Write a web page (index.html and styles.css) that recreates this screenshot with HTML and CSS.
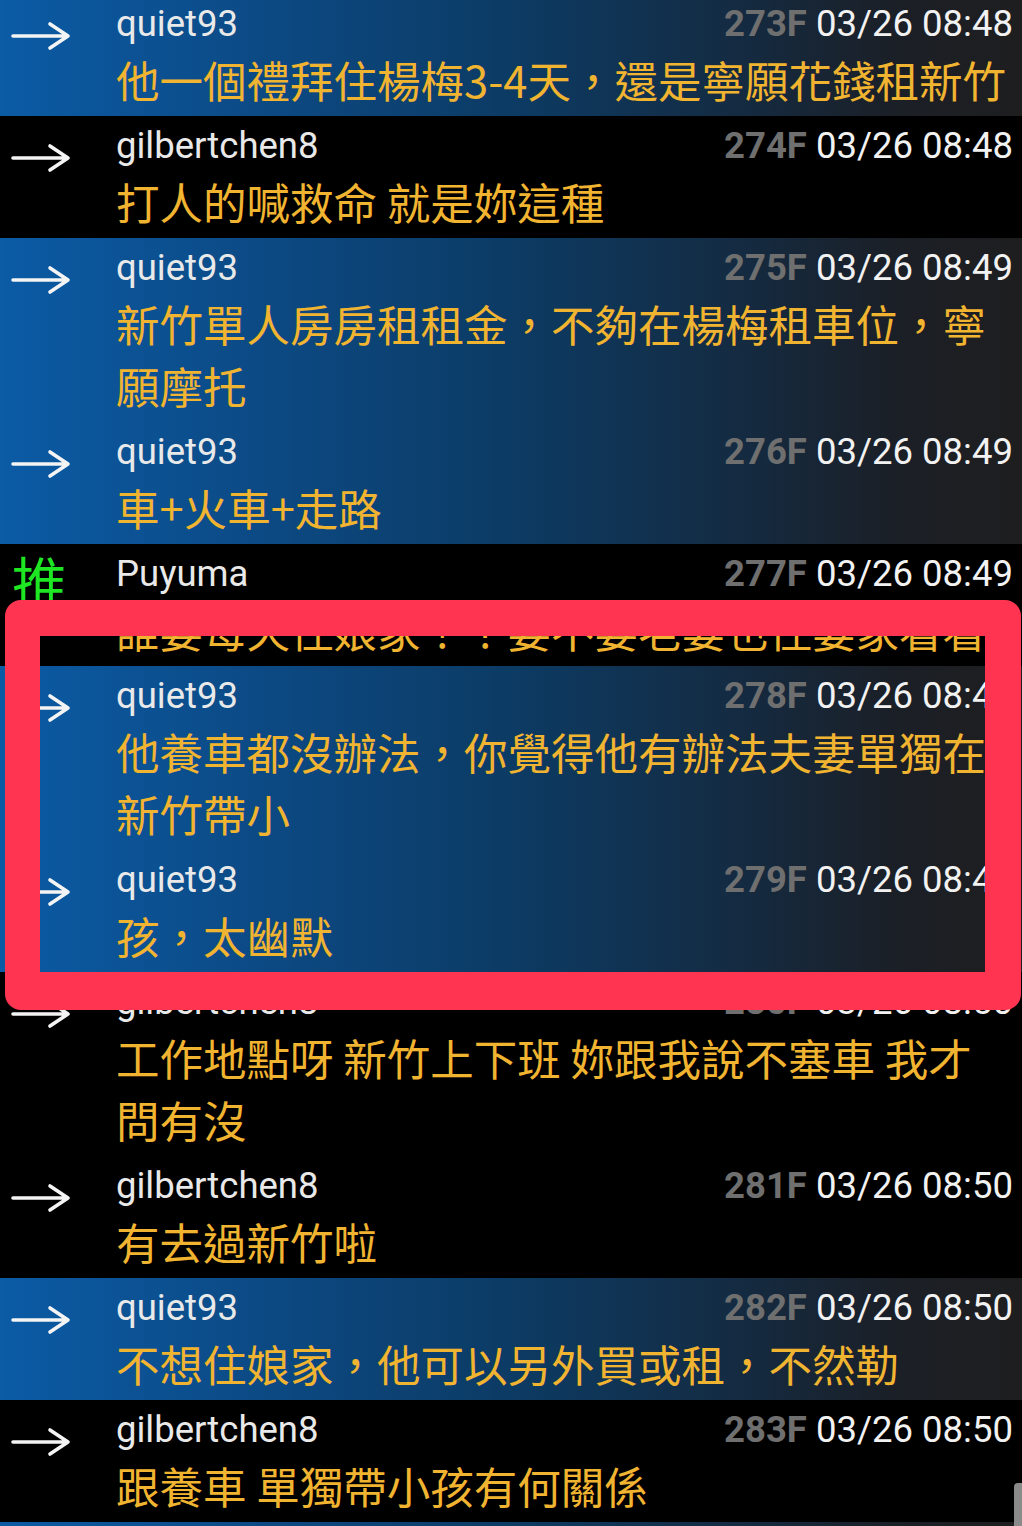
FILE: index.html
```html
<!DOCTYPE html>
<html lang="zh-Hant">
<head>
<meta charset="utf-8">
<title>PTT 推文</title>
<link rel="stylesheet" href="styles.css">
</head>
<body>
<div class="screen">
  <div class="thread">
    <div class="post blue">
      <div class="tag"><svg class="arrow" viewBox="0 0 60 30"><path d="M2 15H57M39 3L57 15L39 27"/></svg></div>
      <div class="body">
        <div class="head"><span class="user">quiet93</span><span class="meta"><b class="floor">273F</b> 03/26 08:48</span></div>
        <div class="line">他一個禮拜住楊梅3-4天，還是寧願花錢租新竹</div>
      </div>
    </div>
    <div class="post black">
      <div class="tag"><svg class="arrow" viewBox="0 0 60 30"><path d="M2 15H57M39 3L57 15L39 27"/></svg></div>
      <div class="body">
        <div class="head"><span class="user">gilbertchen8</span><span class="meta"><b class="floor">274F</b> 03/26 08:48</span></div>
        <div class="line">打人的喊救命 就是妳這種</div>
      </div>
    </div>
    <div class="post blue">
      <div class="tag"><svg class="arrow" viewBox="0 0 60 30"><path d="M2 15H57M39 3L57 15L39 27"/></svg></div>
      <div class="body">
        <div class="head"><span class="user">quiet93</span><span class="meta"><b class="floor">275F</b> 03/26 08:49</span></div>
        <div class="line">新竹單人房房租租金，不夠在楊梅租車位，寧</div>
        <div class="line">願摩托</div>
      </div>
    </div>
    <div class="post blue">
      <div class="tag"><svg class="arrow" viewBox="0 0 60 30"><path d="M2 15H57M39 3L57 15L39 27"/></svg></div>
      <div class="body">
        <div class="head"><span class="user">quiet93</span><span class="meta"><b class="floor">276F</b> 03/26 08:49</span></div>
        <div class="line">車+火車+走路</div>
      </div>
    </div>
    <div class="post black">
      <div class="tag"><span class="push">推</span></div>
      <div class="body">
        <div class="head"><span class="user">Puyuma</span><span class="meta"><b class="floor">277F</b> 03/26 08:49</span></div>
        <div class="line">誰要每天住娘家！？要不要老婆也住婆家看看！</div>
      </div>
    </div>
    <div class="post blue">
      <div class="tag"><svg class="arrow" viewBox="0 0 60 30"><path d="M2 15H57M39 3L57 15L39 27"/></svg></div>
      <div class="body">
        <div class="head"><span class="user">quiet93</span><span class="meta"><b class="floor">278F</b> 03/26 08:49</span></div>
        <div class="line">他養車都沒辦法，你覺得他有辦法夫妻單獨在</div>
        <div class="line">新竹帶小</div>
      </div>
    </div>
    <div class="post blue">
      <div class="tag"><svg class="arrow" viewBox="0 0 60 30"><path d="M2 15H57M39 3L57 15L39 27"/></svg></div>
      <div class="body">
        <div class="head"><span class="user">quiet93</span><span class="meta"><b class="floor">279F</b> 03/26 08:49</span></div>
        <div class="line">孩，太幽默</div>
      </div>
    </div>
    <div class="post black">
      <div class="tag"><svg class="arrow" viewBox="0 0 60 30"><path d="M2 15H57M39 3L57 15L39 27"/></svg></div>
      <div class="body">
        <div class="head"><span class="user">gilbertchen8</span><span class="meta"><b class="floor">280F</b> 03/26 08:50</span></div>
        <div class="line">工作地點呀 新竹上下班 妳跟我說不塞車 我才</div>
        <div class="line">問有沒</div>
      </div>
    </div>
    <div class="post black">
      <div class="tag"><svg class="arrow" viewBox="0 0 60 30"><path d="M2 15H57M39 3L57 15L39 27"/></svg></div>
      <div class="body">
        <div class="head"><span class="user">gilbertchen8</span><span class="meta"><b class="floor">281F</b> 03/26 08:50</span></div>
        <div class="line">有去過新竹啦</div>
      </div>
    </div>
    <div class="post blue">
      <div class="tag"><svg class="arrow" viewBox="0 0 60 30"><path d="M2 15H57M39 3L57 15L39 27"/></svg></div>
      <div class="body">
        <div class="head"><span class="user">quiet93</span><span class="meta"><b class="floor">282F</b> 03/26 08:50</span></div>
        <div class="line">不想住娘家，他可以另外買或租，不然勒</div>
      </div>
    </div>
    <div class="post black">
      <div class="tag"><svg class="arrow" viewBox="0 0 60 30"><path d="M2 15H57M39 3L57 15L39 27"/></svg></div>
      <div class="body">
        <div class="head"><span class="user">gilbertchen8</span><span class="meta"><b class="floor">283F</b> 03/26 08:50</span></div>
        <div class="line">跟養車 單獨帶小孩有何關係</div>
      </div>
    </div>
    <div class="post blue tail">
      <div class="tag"></div>
      <div class="body"></div>
    </div>
  </div>
  <div class="highlight"></div>
  <div class="scrollbar"></div>
</div>
</body>
</html>
```

FILE: styles.css
```css
html, body {
  margin: 0;
  padding: 0;
  background: #000;
}

.screen {
  position: relative;
  width: 1022px;
  height: 1526px;
  overflow: hidden;
  background: #000;
}

.thread {
  display: flex;
  flex-direction: column;
  margin-top: -6px;
}

.post {
  display: grid;
  grid-template-columns: 116px 1fr;
  padding-right: 9px;
}

.post.blue {
  background: linear-gradient(to right, #0b5ba5 0%, #0c4a85 25%, #0c3b64 50%, #142b42 72%, #1b1f26 88%, #1e1e1f 100%);
}

.post.black {
  background: #000;
}

.post.tail {
  height: 60px;
}

.tag {
  position: relative;
}

.arrow {
  display: block;
  width: 60px;
  height: 30px;
  margin: 27px 0 0 11px;
  fill: none;
  stroke: #f4f4f4;
  stroke-width: 3.6;
  stroke-linecap: round;
  stroke-linejoin: round;
}

.push {
  display: block;
  margin: 8px 0 0 12px;
  font-family: "Noto Sans CJK TC", "Noto Sans CJK SC", sans-serif;
  font-size: 55px;
  line-height: 1;
  color: #1ee622;
}

.body {
  min-width: 0;
  overflow: hidden;
}

.head {
  display: flex;
  justify-content: space-between;
  align-items: center;
  height: 60px;
  font-family: Roboto, "Liberation Sans", sans-serif;
  font-size: 36.5px;
  line-height: 60px;
  white-space: nowrap;
}

.user {
  color: #e9e9e9;
}

.meta {
  color: #f2f2f2;
}

.floor {
  color: #6f6f6f;
  font-weight: 700;
}

.line {
  height: 62px;
  font-family: "Noto Sans CJK TC", "Noto Sans CJK SC", sans-serif;
  font-size: 43.5px;
  line-height: 52px;
  color: #f1b431;
  white-space: nowrap;
}

.highlight {
  position: absolute;
  left: 5px;
  top: 600px;
  width: 1016px;
  height: 410px;
  box-sizing: border-box;
  border-style: solid;
  border-color: #fe3450;
  border-width: 36px 36px 38px 35px;
  border-radius: 16px;
}

.scrollbar {
  position: absolute;
  right: 0;
  top: 1483px;
  width: 8px;
  height: 50px;
  background: #8a8a8a;
  border-radius: 4px 0 0 0;
}
```
